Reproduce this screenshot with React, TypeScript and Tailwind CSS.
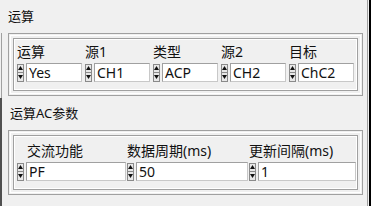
import React from "react";

const FONT = "font-['Noto_Sans','Noto_Sans_CJK_SC',sans-serif]";

function Spin() {
  return (
    <div className="flex flex-col w-[7px] h-[18px] shrink-0 border border-[#8a8a8a] bg-[#e8e8e8]">
      <div className="flex-1 flex items-center justify-center border-b border-[#8a8a8a]">
        <svg width="5" height="4" viewBox="0 0 5 4" aria-hidden>
          <path d="M2.5 0 L5 4 L0 4 Z" fill="#111" />
        </svg>
      </div>
      <div className="flex-1 flex items-center justify-center">
        <svg width="5" height="4" viewBox="0 0 5 4" aria-hidden>
          <path d="M0 0 L5 0 L2.5 4 Z" fill="#111" />
        </svg>
      </div>
    </div>
  );
}

function Field({ value, width }: { value: string; width: string }) {
  return (
    <div className="flex items-center gap-[2px]">
      <Spin />
      <div
        className={`${width} h-[19px] bg-white border border-t-[#a0a0a0] border-l-[#a0a0a0] border-r-[#c8c8c8] border-b-[#c8c8c8] flex items-center pl-[2px] text-[14px] leading-none text-[#111]`}
      >
        {value}
      </div>
    </div>
  );
}

function Group({ children, height }: { children: React.ReactNode; height: string }) {
  return (
    <div className={`ml-[6px] w-[355px] ${height} border border-[#a0a0a0] p-[1px]`}>
      <div className="h-full border border-white p-[2px]">
        <div className="h-full border border-[#a0a0a0]">
          <div className="h-full border border-white">{children}</div>
        </div>
      </div>
    </div>
  );
}

const ROW1 = [
  { label: "运算", value: "Yes" },
  { label: "源1", value: "CH1" },
  { label: "类型", value: "ACP" },
  { label: "源2", value: "CH2" },
  { label: "目标", value: "ChC2" },
];

export default function App() {
  return (
    <div className={`w-[371px] h-[206px] bg-[#f0f0f0] overflow-hidden flex ${FONT} text-[#111]`}>
      <div className="w-[2px] flex flex-col shrink-0">
        <div className="h-[33px]" />
        <div className="h-[65px] border-r border-[#a0a0a0]" />
        <div className="flex-1 bg-[#505050]" />
      </div>
      <div className="flex-1 flex flex-col border-r border-[#a0a0a0] mr-[1px]">
        <div className="pl-[6px] pt-[7px] h-[33px] text-[13px] leading-[18px]">运算</div>
        <Group height="h-[63px]">
          <div className="flex pl-[1px]">
            {ROW1.map((c) => (
              <div key={c.label} className="w-[69px] pl-[1px] flex flex-col">
                <div className="h-[21px] pt-[3px] text-[14px] leading-[18px]">{c.label}</div>
                <div className="mt-[2px]">
                  <Field value={c.value} width="w-[56px]" />
                </div>
              </div>
            ))}
          </div>
        </Group>
        <div className="pl-[8px] pt-[8px] h-[34px] text-[13px] leading-[18px]">运算AC参数</div>
        <Group height="h-[65px]">
          <div className="flex pl-[1px]">
            <div className="w-[113px] pl-[1px] flex flex-col">
              <div className="h-[23px] pt-[5px] pl-[10px] text-[14px] leading-[18px]">交流功能</div>
              <div className="mt-[2px]">
                <Field value="PF" width="w-[100px]" />
              </div>
            </div>
            <div className="w-[124px] pl-[1px] flex flex-col">
              <div className="h-[23px] pt-[5px] text-[14px] leading-[18px]">数据周期(ms)</div>
              <div className="mt-[2px]">
                <Field value="50" width="w-[112px]" />
              </div>
            </div>
            <div className="w-[108px] pl-[1px] flex flex-col">
              <div className="h-[23px] pt-[5px] text-[14px] leading-[18px]">更新间隔(ms)</div>
              <div className="mt-[2px]">
                <Field value="1" width="w-[98px]" />
              </div>
            </div>
          </div>
        </Group>
      </div>
      <div className="w-[2px] h-full bg-black" />
    </div>
  );
}
